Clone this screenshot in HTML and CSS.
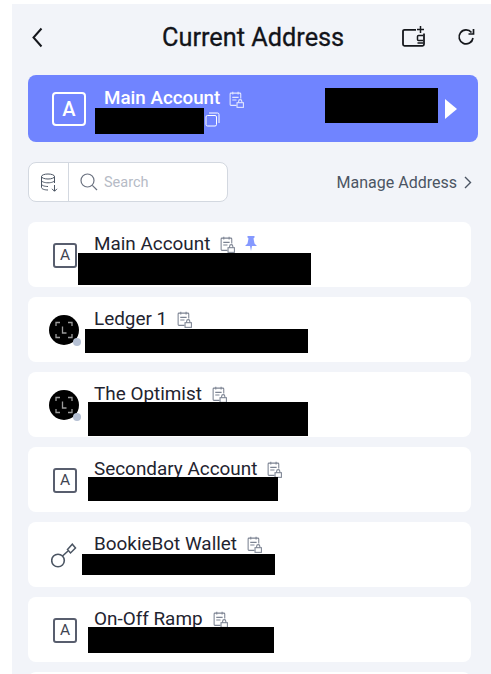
FILE: index.html
```html
<!DOCTYPE html>
<html lang="en">
<head>
    <meta charset="UTF-8">
    <meta name="viewport" content="width=device-width, initial-scale=1.0">
    <title>Current Address</title>
    <link rel="stylesheet" href="styles.css">
</head>
<body>
    <svg class="defs" width="0" height="0">
        <symbol id="note" viewBox="0 0 14 16">
            <path d="M7 13.500H1.800a.8.8 0 0 1-.8-.8V2.800a.8.8 0 0 1 .8-.8h8.400a.8.8 0 0 1 .8.8V7M3.500.6v2.600M8.500.6v2.600M3 6h6M3 8.500h4" fill="none" stroke="currentColor" stroke-width="1"/>
            <rect x="7.500" y="11" width="6" height="4.400" fill="none" stroke="currentColor" stroke-width="1"/>
            <path d="M9 11V9.600a1.500 1.500 0 0 1 3 0V11" fill="none" stroke="currentColor" stroke-width="1"/>
        </symbol>
        <symbol id="ledger" viewBox="0 0 30 30">
            <circle cx="15" cy="15" r="15" fill="#000"/>
            <path d="M7 11V7.500h4M19 7.500h4V11M23 19v3.500h-4M11 22.500H7V19M13.500 11.500v6.500h4" fill="none" stroke="#9b9b9b" stroke-width="1.300"/>
        </symbol>
    </svg>

    <div class="panel">
        <header class="top-bar">
            <svg class="back" width="11" height="21" viewBox="0 0 11 21"><path d="M9.500 1.500 1.500 10.500l8 9" fill="none" stroke="#15171c" stroke-width="2"/></svg>
            <h1>Current Address</h1>
            <svg class="add-wallet" width="24" height="21" viewBox="0 0 24 21">
                <path d="M14 3.800H2.500A1.500 1.500 0 0 0 1 5.300v13a1.500 1.500 0 0 0 1.500 1.500h18a1.500 1.500 0 0 0 1.500-1.500V7.500" fill="none" stroke="#15171c" stroke-width="1.800"/>
                <path d="M18.500 0v7M15 3.500h7" fill="none" stroke="#15171c" stroke-width="1.500"/>
                <path d="M21 9.500h-4.500a1 1 0 0 0-1 1v3a1 1 0 0 0 1 1H21M15.500 17H21" fill="none" stroke="#15171c" stroke-width="1.500"/>
            </svg>
            <svg class="refresh" width="18" height="18" viewBox="0 0 18 18">
                <path d="M14.500 4.500A7 7 0 1 0 16 10" fill="none" stroke="#15171c" stroke-width="1.700"/>
                <path d="M16.500 1v5h-5" fill="none" stroke="#15171c" stroke-width="1.700"/>
            </svg>
        </header>

        <section class="current-card">
            <div class="current-icon">A</div>
            <div class="current-name">
                <span>Main Account</span>
                <svg class="note-white" width="15" height="17"><use href="#note"/></svg>
            </div>
            <svg class="copy" width="15" height="15" viewBox="0 0 15 15">
                <rect x="1" y="3.500" width="10.500" height="10.500" rx="1.500" fill="none" stroke="#fff"/>
                <path d="M4 1h8.500A1.500 1.500 0 0 1 14 2.500V11" fill="none" stroke="#fff"/>
            </svg>
            <div class="redact redact-addr"></div>
            <div class="redact redact-balance"></div>
            <div class="arrow"></div>
        </section>

        <div class="tools">
            <div class="search-box">
                <div class="chain-btn">
                    <svg width="18" height="19" viewBox="0 0 18 19">
                        <ellipse cx="8" cy="3.500" rx="6.500" ry="2.500" fill="none" stroke="#4b5563"/>
                        <path d="M1.500 3.500v11c0 1.400 2.900 2.500 6.500 2.500M14.500 3.500V10M1.500 7.300c0 1.400 2.900 2.500 6.500 2.500s6.500-1.100 6.500-2.500M1.500 11c0 1.400 2.900 2.500 6.500 2.500M14.500 12v6M12 15.800l2.500 2.500 2.500-2.500" fill="none" stroke="#4b5563"/>
                    </svg>
                </div>
                <div class="search-field">
                    <svg width="18" height="18" viewBox="0 0 18 18">
                        <circle cx="7.500" cy="7.500" r="6.500" fill="none" stroke="#6b7280" stroke-width="1.200"/>
                        <path d="M12.300 12.300 17 17" stroke="#6b7280" stroke-width="1.200"/>
                    </svg>
                    <span>Search</span>
                </div>
            </div>
            <a class="manage">Manage Address
                <svg width="8" height="13" viewBox="0 0 8 13"><path d="M1 1l5.500 5.500L1 12" fill="none" stroke="#4b5563" stroke-width="1.400"/></svg>
            </a>
        </div>

        <ul class="list">
            <li class="row">
                <div class="slot"><div class="acct-icon">A</div></div>
                <div class="name-line">
                    <span class="name">Main Account</span>
                    <svg class="note" width="15" height="17"><use href="#note"/></svg>
                    <svg class="pin" width="12" height="15" viewBox="0 0 12 15"><path d="M2.500 0h7v1.500L8.500 2.500 9.500 7.500 12 10H7L6 15 5 10H0l2.500-2.500 1-5-1-1z" fill="#8599ff"/></svg>
                </div>
                <div class="redact r1"></div>
            </li>
            <li class="row">
                <div class="slot"><div class="avatar"><svg width="30" height="30"><use href="#ledger"/></svg><i class="dot"></i></div></div>
                <div class="name-line">
                    <span class="name">Ledger 1</span>
                    <svg class="note" width="15" height="17"><use href="#note"/></svg>
                </div>
                <div class="redact r2"></div>
            </li>
            <li class="row">
                <div class="slot"><div class="avatar"><svg width="30" height="30"><use href="#ledger"/></svg><i class="dot"></i></div></div>
                <div class="name-line">
                    <span class="name">The Optimist</span>
                    <svg class="note" width="15" height="17"><use href="#note"/></svg>
                </div>
                <div class="redact r3"></div>
            </li>
            <li class="row">
                <div class="slot"><div class="acct-icon">A</div></div>
                <div class="name-line">
                    <span class="name">Secondary Account</span>
                    <svg class="note" width="15" height="17"><use href="#note"/></svg>
                </div>
                <div class="redact r4"></div>
            </li>
            <li class="row">
                <div class="slot">
                    <svg class="key" width="26" height="25" viewBox="0 0 26 25">
                        <circle cx="7" cy="17.500" r="6.300" fill="none" stroke="#4b5563" stroke-width="1.600"/>
                        <path d="M11.500 13 17 8" fill="none" stroke="#4b5563" stroke-width="1.600"/>
                        <path d="M16.500 6.500l3 3.500 5-5-3.200-3.800z" fill="none" stroke="#4b5563" stroke-width="1.500"/>
                    </svg>
                </div>
                <div class="name-line">
                    <span class="name">BookieBot Wallet</span>
                    <svg class="note" width="15" height="17"><use href="#note"/></svg>
                </div>
                <div class="redact r5"></div>
            </li>
            <li class="row">
                <div class="slot"><div class="acct-icon">A</div></div>
                <div class="name-line">
                    <span class="name">On-Off Ramp</span>
                    <svg class="note" width="15" height="17"><use href="#note"/></svg>
                </div>
                <div class="redact r6"></div>
            </li>
            <li class="row"></li>
        </ul>
    </div>
</body>
</html>
```

FILE: styles.css
```css
html, body {
    height: 674px;
    overflow: hidden;
}
body {
    margin: 0;
    padding: 4px 0 0 12px;
    box-sizing: border-box;
    background-color: #fff;
    font-family: Roboto, "Liberation Sans", sans-serif;
    color: #192945;
}
.defs {
    position: absolute;
}
.panel {
    background-color: #f2f4f9;
    padding: 0 13px 0 16px;
    height: 670px;
    overflow: hidden;
}
.top-bar {
    height: 66px;
    margin-bottom: 5px;
    display: flex;
    align-items: center;
    position: relative;
}
.top-bar h1 {
    margin: 0;
    position: absolute;
    left: 134px;
    top: 19px;
    line-height: 30px;
    font-size: 25.300px;
    font-weight: 400;
    color: #13141a;
    -webkit-text-stroke: 0.3px #13141a;
}
.back {
    margin-left: 4px;
}
.add-wallet {
    margin-left: auto;
    margin-top: -1px;
}
.refresh {
    margin-left: 31px;
    margin-right: 3px;
}

/* current account card */
.current-card {
    height: 67px;
    background-color: #7084ff;
    border-radius: 8px;
    position: relative;
    display: flex;
    color: #fff;
}
.current-icon {
    width: 30px;
    height: 30px;
    margin: 17px 0 0 24px;
    border: 2px solid #fff;
    border-radius: 4px;
    font-size: 20px;
    font-weight: 500;
    text-align: center;
    line-height: 30px;
}
.current-name {
    margin: 10px 0 0 18px;
    display: flex;
    align-items: center;
    gap: 9px;
    height: 26px;
    font-size: 18.800px;
    font-weight: 500;
}
.note-white {
    color: #e4e8ff;
    margin-top: 3px;
}
.copy {
    position: absolute;
    left: 177px;
    top: 37px;
}
.arrow {
    position: absolute;
    left: 417px;
    top: 24px;
    border-left: 12px solid #fff;
    border-top: 10px solid transparent;
    border-bottom: 10px solid transparent;
}

/* black boxes over the hidden addresses */
.redact {
    position: absolute;
    background-color: #000;
}
.redact-addr { left: 67px; top: 33px; width: 109px; height: 26px; }
.redact-balance { left: 297px; top: 13px; width: 113px; height: 35px; }
.r1 { left: 50px; top: 31px; width: 233px; height: 32px; }
.r2 { left: 57px; top: 32px; width: 223px; height: 24px; }
.r3 { left: 60px; top: 30px; width: 220px; height: 34px; }
.r4 { left: 60px; top: 30px; width: 190px; height: 24px; }
.r5 { left: 54px; top: 32px; width: 193px; height: 21px; }
.r6 { left: 60px; top: 30px; width: 186px; height: 26px; }

/* search row */
.tools {
    margin-top: 20px;
    height: 40px;
    display: flex;
    align-items: center;
    justify-content: space-between;
}
.search-box {
    width: 198px;
    height: 38px;
    display: flex;
    background-color: #fff;
    border: 1px solid #d3d8e0;
    border-radius: 8px;
}
.chain-btn {
    width: 39px;
    border-right: 1px solid #d3d8e0;
    display: flex;
    align-items: center;
    justify-content: center;
}
.search-field {
    display: flex;
    align-items: center;
    gap: 6px;
    padding-left: 11px;
    font-size: 14.500px;
    color: #b6bbc6;
}
.manage {
    display: flex;
    align-items: center;
    gap: 7px;
    margin-right: 6px;
    font-size: 16px;
    color: #4b5563;
}

/* address list */
.list {
    list-style: none;
    margin: 20px 7px 0 0;
    padding: 0;
    display: flex;
    flex-direction: column;
    gap: 10px;
}
.row {
    flex: none;
    height: 65px;
    background-color: #fff;
    border-radius: 8px;
    position: relative;
    display: flex;
}
.slot {
    width: 66px;
    flex: none;
    padding-left: 21px;
    box-sizing: border-box;
    display: flex;
    align-items: center;
}
.acct-icon {
    width: 20px;
    height: 21px;
    margin: 1px 0 0 4px;
    border: 2px solid #585e6e;
    border-radius: 3px;
    font-size: 15.500px;
    line-height: 21px;
    text-align: center;
    color: #3f4552;
}
.avatar {
    position: relative;
    width: 30px;
    height: 30px;
    margin-top: 1px;
}
.dot {
    position: absolute;
    right: -2px;
    bottom: -1px;
    width: 8px;
    height: 8px;
    border-radius: 50%;
    background-color: #b6c1d4;
}
.key {
    margin-top: 1px;
    margin-left: 2px;
}
.name-line {
    display: flex;
    align-items: flex-start;
    gap: 10px;
    height: 24px;
    margin-top: 10px;
}
.name {
    font-size: 18.900px;
    line-height: 24px;
    color: #1f2430;
}
.note {
    color: #7d8493;
    margin-top: 4px;
}
.pin {
    margin: 4px 0 0 0;
}
```
